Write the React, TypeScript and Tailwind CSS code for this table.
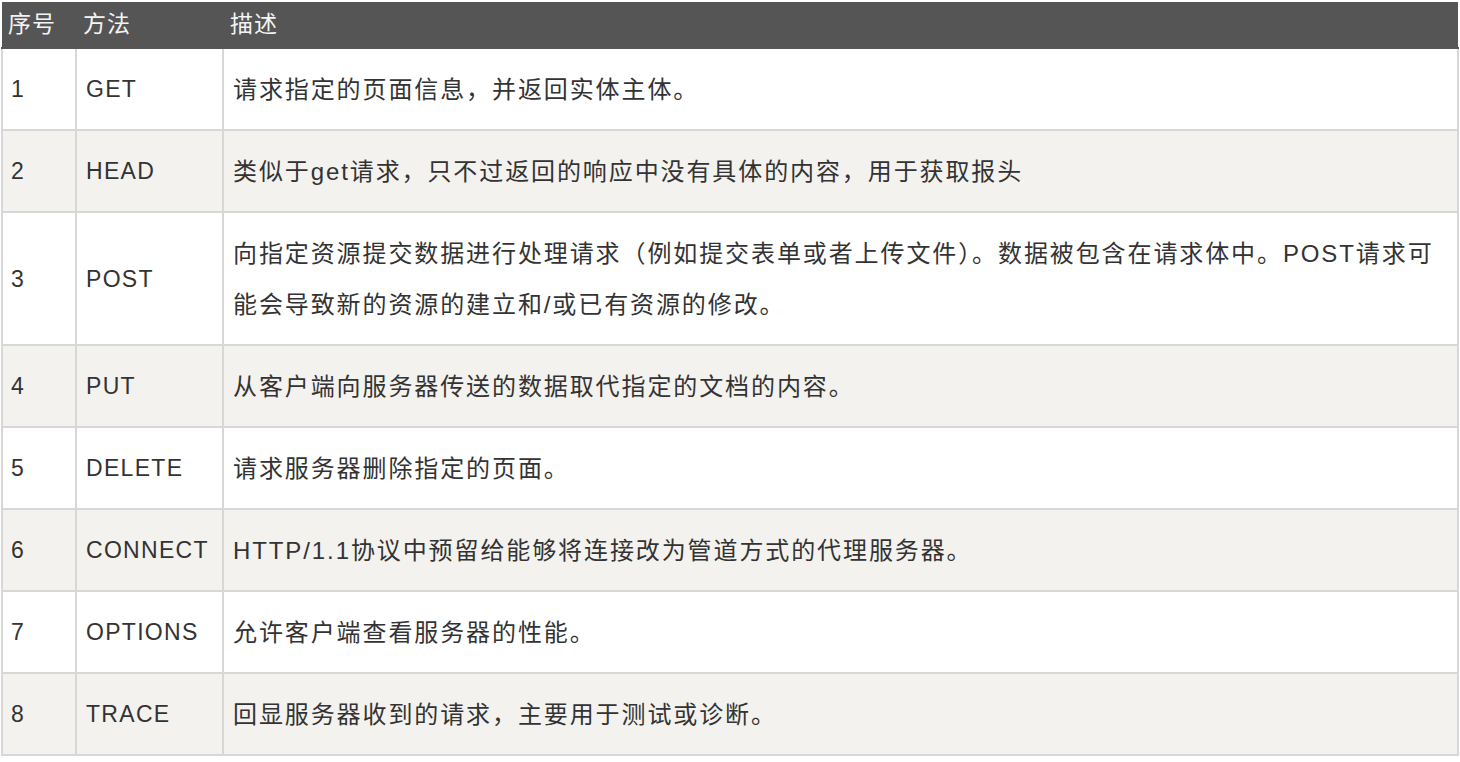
const rows = [
  { id: "1", method: "GET", desc: "请求指定的页面信息，并返回实体主体。" },
  { id: "2", method: "HEAD", desc: "类似于get请求，只不过返回的响应中没有具体的内容，用于获取报头" },
  {
    id: "3",
    method: "POST",
    desc: "向指定资源提交数据进行处理请求（例如提交表单或者上传文件）。数据被包含在请求体中。POST请求可",
    desc2: "能会导致新的资源的建立和/或已有资源的修改。",
  },
  { id: "4", method: "PUT", desc: "从客户端向服务器传送的数据取代指定的文档的内容。" },
  { id: "5", method: "DELETE", desc: "请求服务器删除指定的页面。" },
  { id: "6", method: "CONNECT", desc: "HTTP/1.1协议中预留给能够将连接改为管道方式的代理服务器。" },
  { id: "7", method: "OPTIONS", desc: "允许客户端查看服务器的性能。" },
  { id: "8", method: "TRACE", desc: "回显服务器收到的请求，主要用于测试或诊断。" },
];

export default function App() {
  return (
    <div
      className="min-h-screen bg-white pt-[2px] pl-[1px] pr-[1px]"
      style={{ fontFamily: '"Liberation Sans", "Noto Sans CJK SC", sans-serif' }}
    >
      <table className="w-[1458px] table-fixed border-collapse text-[#333]">
        <colgroup>
          <col className="w-[74px]" />
          <col className="w-[147px]" />
          <col />
        </colgroup>
        <thead>
          <tr className="bg-[#555555] text-[#f4f4f4] text-[23px] h-[46px]">
            <th className="px-[6px] text-left font-normal tracking-[1px] border-b-2 border-[#555555]">序号</th>
            <th className="px-[7px] text-left font-normal tracking-[1px] border-b-2 border-[#555555]">方法</th>
            <th className="px-[7px] text-left font-normal tracking-[1px] border-b-2 border-[#555555]">描述</th>
          </tr>
        </thead>
        <tbody>
          {rows.map((r, i) => (
            <tr key={r.id} className={i % 2 === 1 ? "bg-[#f3f2ef]" : "bg-white"}>
              <td className="border-2 border-[#d7d7d7] px-[8px] pt-[15px] pb-[14px] text-[23px] leading-[51px] tracking-[1px]">
                {r.id}
              </td>
              <td className="border-2 border-[#d7d7d7] px-[9px] pt-[15px] pb-[14px] text-[23px] leading-[51px] tracking-[1.3px] whitespace-nowrap">
                {r.method}
              </td>
              <td className="border-2 border-[#d7d7d7] px-[9px] pt-[15px] pb-[14px] text-[24px] leading-[51px] tracking-[1.9px] whitespace-nowrap">
                {r.desc}
                {r.desc2 && (
                  <>
                    <br />
                    {r.desc2}
                  </>
                )}
              </td>
            </tr>
          ))}
        </tbody>
      </table>
    </div>
  );
}
